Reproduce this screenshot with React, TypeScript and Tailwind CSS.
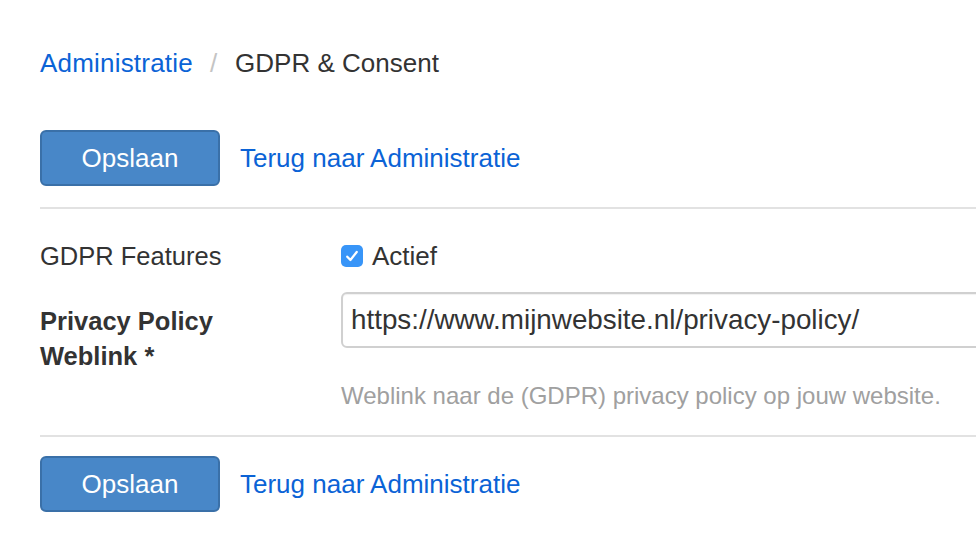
export default function App() {
  return (
    <div
      className="w-[976px] h-[536px] overflow-hidden bg-white text-[#333] pl-10 pt-[45px]"
      style={{ fontFamily: '"Liberation Sans", Arial, sans-serif', fontSize: "26px" }}
    >
      {/* breadcrumb */}
      <div className="flex items-center leading-[36px]">
        <a className="text-[#0b63d6] tracking-[0.2px]">Administratie</a>
        <span className="ml-[17px] mr-[18px] text-[#c4c4c4]">/</span>
        <span>GDPR &amp; Consent</span>
      </div>

      <ActionRow className="mt-[49px]" />

      <div className="mt-[21px] border-t-2 border-[#e2e2e2]" />

      <div className="mt-[29px] flex items-center leading-[36px]">
        <div className="w-[301px] shrink-0 text-[25.5px]">GDPR Features</div>
        <label className="flex items-center gap-[9px]">
          <span className="w-[22px] h-[22px] rounded-[5px] bg-[#3895f8] flex items-center justify-center">
            <svg viewBox="0 0 16 16" className="w-[18px] h-[18px]">
              <path d="M3.8 8.6 L6.6 11.6 L12.2 4.4" fill="none" stroke="#fff" strokeWidth="2" strokeLinecap="round" strokeLinejoin="round" />
            </svg>
          </span>
          <span>Actief</span>
        </label>
      </div>

      <div className="mt-[18px] flex">
        <div className="w-[301px] shrink-0 pt-[12px] leading-[35px] font-bold text-[25.5px]">
          Privacy Policy
          <br />
          Weblink *
        </div>
        <div className="shrink-0">
          <div className="w-[700px] h-[56px] border-2 border-[#d0d0d0] rounded-[6px] flex items-center px-[8px] text-[27.8px] shadow-[inset_0_1px_1px_rgba(0,0,0,0.06)]">
            https://www.mijnwebsite.nl/privacy-policy/
          </div>
          <div className="mt-[30px] leading-[36px] text-[24px] text-[#a0a0a0]">
            Weblink naar de (GDPR) privacy policy op jouw website.
          </div>
        </div>
      </div>

      <div className="mt-[21px] border-t-2 border-[#e2e2e2]" />

      <ActionRow className="mt-[19px]" />
    </div>
  );
}

function ActionRow({ className }: { className?: string }) {
  return (
    <div className={`flex items-center ${className ?? ""}`}>
      <button className="w-[180px] h-[56px] rounded-[6px] bg-[#4887c8] border-2 border-[#3a70a8] text-white">
        Opslaan
      </button>
      <a className="ml-[20px] text-[#0b63d6]">Terug naar Administratie</a>
    </div>
  );
}
